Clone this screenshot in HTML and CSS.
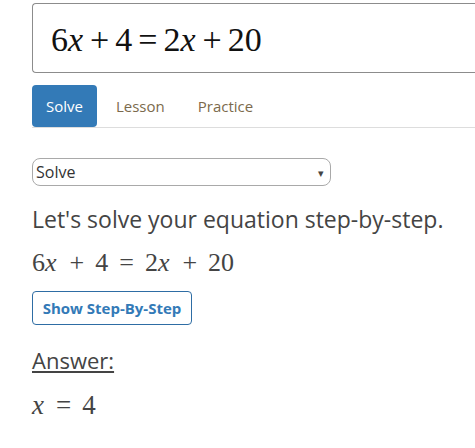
FILE: index.html
```html
<!DOCTYPE html>
<html>
<head>
<meta charset="utf-8">
<link rel="stylesheet" href="styles.css">
</head>
<body>
<div class="page">
  <div class="eq-input">
    <span class="mq"><span>6</span><i>x</i><span class="op">+</span><span>4</span><span class="op">=</span><span>2</span><i>x</i><span class="op">+</span><span>20</span></span>
  </div>

  <div class="tabs">
    <a class="tab active">Solve</a>
    <a class="tab">Lesson</a>
    <a class="tab">Practice</a>
  </div>

  <div class="select">
    <span>Solve</span>
    <span class="caret">&#9662;</span>
  </div>

  <p class="intro">Let's solve your equation step-by-step.</p>

  <div class="math"><span>6</span><i>x</i><span class="bin">+</span><span>4</span><span class="rel">=</span><span>2</span><i>x</i><span class="bin">+</span><span>20</span></div>

  <button class="steps">Show Step-By-Step</button>

  <div class="answer-label">Answer:</div>

  <div class="math answer"><i>x</i><span class="rel">=</span><span>4</span></div>
</div>
</body>
</html>
```

FILE: styles.css
```css
html, body {
  margin: 0;
  padding: 0;
  background: #fff;
  overflow: hidden;
}

.page {
  padding: 3px 0 0 32px;
  font-family: "Open Sans", "Noto Sans", sans-serif;
  color: #444;
  width: 443px;
}

.eq-input {
  box-sizing: border-box;
  width: 443px;
  height: 70px;
  border: 1px solid #8c8c8c;
  border-right: none;
  border-radius: 4px 0 0 4px;
  display: flex;
  align-items: center;
  padding-left: 18px;
}

.mq {
  font-family: "Liberation Serif", "Times New Roman", serif;
  font-size: 34px;
  color: #111;
  display: flex;
  align-items: baseline;
  margin-top: 4px;
}

.mq i { font-style: italic; padding-right: 1px; }
.mq .op { margin: 0 6px; }

.tabs {
  margin-top: 12px;
  display: flex;
  align-items: stretch;
  border-bottom: 1px solid #ddd;
  height: 42px;
}

.tab {
  display: flex;
  align-items: center;
  padding: 0 14px;
  font-size: 15px;
  color: #7b6a4c;
  margin-right: 5px;
}

.tab.active {
  background: #337ab7;
  color: #fff;
  border-radius: 4px;
}

.select {
  box-sizing: border-box;
  margin-top: 30px;
  width: 299px;
  height: 28px;
  border: 1px solid #a9a9a9;
  border-radius: 8px;
  display: flex;
  align-items: center;
  justify-content: space-between;
  padding: 0 6px 0 3px;
  font-size: 16px;
  color: #333;
}

.caret {
  font-size: 11px;
  color: #444;
}

.intro {
  margin: 18px 0 0;
  font-size: 23px;
  line-height: 30px;
  color: #444;
}

.math {
  font-family: "Liberation Serif", "Times New Roman", serif;
  font-size: 26px;
  color: #444;
  display: flex;
  align-items: baseline;
  margin-top: 14px;
  line-height: 30px;
}

.math i { padding-right: 2px; }
.math .bin, .math .rel { margin: 0 11px; }

.steps {
  display: block;
  margin-top: 13px;
  box-sizing: border-box;
  width: 160px;
  height: 34px;
  background: #fff;
  border: 1px solid #2e6da4;
  border-radius: 4px;
  font-family: "Open Sans", "Noto Sans", sans-serif;
  font-weight: bold;
  font-size: 15px;
  color: #337ab7;
  padding: 0;
}

.answer-label {
  margin-top: 20px;
  font-size: 22px;
  line-height: 30px;
  text-decoration: underline;
  color: #444;
}

.answer {
  margin-top: 15px;
  font-size: 27px;
}

.answer i { padding-right: 1px; }
.answer .rel { margin: 0 11px; }
```
